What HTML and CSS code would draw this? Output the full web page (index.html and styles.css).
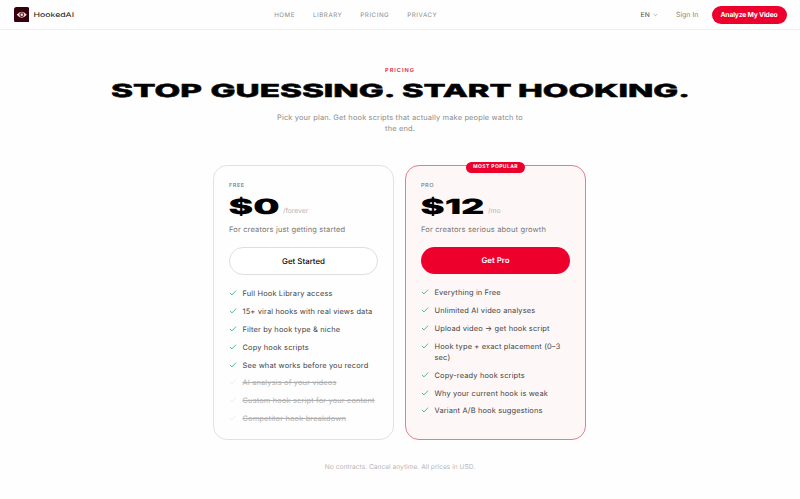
FILE: index.html
```html
<!DOCTYPE html>
<html lang="en">

<head>
    <meta charset="UTF-8">
    <title>HookedAI - Pricing</title>
    <link rel="stylesheet" href="styles.css">
</head>

<body>

    <svg class="defs" width="0" height="0">
        <symbol id="check" viewBox="0 0 8 8">
            <path d="M1.2 4.2 L3 5.9 L6.8 1.9" fill="none" stroke="currentColor" stroke-width="0.9" stroke-linecap="round" stroke-linejoin="round" />
        </symbol>
    </svg>

    <header>
        <div class="brand">
            <svg class="logo" viewBox="0 0 16 16">
                <rect width="16" height="16" rx="2.6" fill="#35000d" />
                <path d="M2.8 8 Q8 1.9 13.2 8 Q8 14.1 2.8 8Z" fill="#f3dcd6" />
                <circle cx="8" cy="8" r="2.5" fill="#6d2632" />
                <circle cx="8" cy="8" r="1.3" fill="#f3dcd6" />
            </svg>
            <svg class="name" width="42" height="14">
                <text x="0.5" y="9.4" textLength="40.5" lengthAdjust="spacingAndGlyphs">HookedAI</text>
            </svg>
        </div>
        <nav>
            <a>HOME</a>
            <a>LIBRARY</a>
            <a>PRICING</a>
            <a>PRIVACY</a>
        </nav>
        <div class="actions">
            <span class="lang">EN
                <svg width="5" height="4" viewBox="0 0 5 4"><path d="M0.7 0.9 L2.5 2.7 L4.3 0.9" fill="none" stroke="#999" stroke-width="0.7" /></svg>
            </span>
            <a class="signin">Sign In</a>
            <a class="cta">Analyze My Video</a>
        </div>
    </header>

    <main>
        <p class="eyebrow">PRICING</p>
        <h1>
            <svg width="580" height="26">
                <text x="1" y="19.5" textLength="91" lengthAdjust="spacingAndGlyphs">STOP</text>
                <text x="100.5" y="19.5" textLength="185" lengthAdjust="spacingAndGlyphs">GUESSING.</text>
                <text x="292" y="19.5" textLength="109.5" lengthAdjust="spacingAndGlyphs">START</text>
                <text x="408" y="19.5" textLength="172" lengthAdjust="spacingAndGlyphs">HOOKING.</text>
            </svg>
        </h1>
        <p class="intro">Pick your plan. Get hook scripts that actually make people watch to the end.</p>

        <section class="plans">
            <article class="card">
                <h2>FREE</h2>
                <div class="price">
                    <svg width="51" height="26">
                        <text x="-0.5" y="20" textLength="51" lengthAdjust="spacingAndGlyphs">$0</text>
                    </svg>
                    <span>/forever</span>
                </div>
                <p class="desc">For creators just getting started</p>
                <a class="button">Get Started</a>
                <ul>
                    <li><svg><use href="#check" /></svg><span>Full Hook Library access</span></li>
                    <li><svg><use href="#check" /></svg><span>15+ viral hooks with real views data</span></li>
                    <li><svg><use href="#check" /></svg><span>Filter by hook type &amp; niche</span></li>
                    <li><svg><use href="#check" /></svg><span>Copy hook scripts</span></li>
                    <li><svg><use href="#check" /></svg><span>See what works before you record</span></li>
                    <li class="off"><svg><use href="#check" /></svg><span>AI analysis of your videos</span></li>
                    <li class="off"><svg><use href="#check" /></svg><span>Custom hook script for your content</span></li>
                    <li class="off"><svg><use href="#check" /></svg><span>Competitor hook breakdown</span></li>
                </ul>
            </article>

            <article class="card pro">
                <div class="badge">MOST POPULAR</div>
                <h2>PRO</h2>
                <div class="price">
                    <svg width="64" height="26">
                        <text x="-0.5" y="20" textLength="64" lengthAdjust="spacingAndGlyphs">$12</text>
                    </svg>
                    <span>/mo</span>
                </div>
                <p class="desc">For creators serious about growth</p>
                <a class="button">Get Pro</a>
                <ul>
                    <li><svg><use href="#check" /></svg><span>Everything in Free</span></li>
                    <li><svg><use href="#check" /></svg><span>Unlimited AI video analyses</span></li>
                    <li><svg><use href="#check" /></svg><span>Upload video → get hook script</span></li>
                    <li><svg><use href="#check" /></svg><span>Hook type + exact placement (0–3 sec)</span></li>
                    <li><svg><use href="#check" /></svg><span>Copy-ready hook scripts</span></li>
                    <li><svg><use href="#check" /></svg><span>Why your current hook is weak</span></li>
                    <li><svg><use href="#check" /></svg><span>Variant A/B hook suggestions</span></li>
                </ul>
            </article>
        </section>

        <p class="note">No contracts. Cancel anytime. All prices in USD.</p>
    </main>

</body>

</html>
```
FILE: styles.css
```css
* {
    box-sizing: border-box;
}

body {
    margin: 0;
    height: 499px;
    overflow: hidden;
    background-color: #fefefe;
    color: #0a0a0a;
    font-family: Inter, "Liberation Sans", sans-serif;
    text-rendering: geometricPrecision;
}

h1, h2, p, ul {
    margin: 0;
    padding: 0;
}

svg {
    display: block;
    flex: none;
}

.defs {
    display: none;
}

header {
    display: flex;
    align-items: center;
    justify-content: space-between;
    height: 30px;
    padding: 0 13.5px;
    border-bottom: 1px solid #efefef;
}

.brand {
    display: flex;
    align-items: center;
    gap: 4px;
}

.logo {
    width: 15.5px;
    height: 15.5px;
}

.name text {
    font-size: 6.6px;
    font-weight: 400;
    fill: #111;
}

nav {
    display: flex;
    gap: 18px;
    margin-right: 4px;
    padding-top: 1px;
    font-size: 6.2px;
    letter-spacing: 0.55px;
    color: #8c8c8c;
}

.actions {
    display: flex;
    align-items: center;
    justify-content: flex-end;
    font-size: 7px;
    color: #888;
}

.lang {
    display: flex;
    align-items: center;
    gap: 3px;
    margin-right: 18px;
    font-size: 6.6px;
    font-weight: 500;
    letter-spacing: 0.2px;
    color: #666;
}

.signin {
    margin-right: 13px;
}

.cta {
    width: 75px;
    height: 18px;
    border-radius: 9px;
    background-color: #ee002d;
    color: #fff;
    font-size: 6.8px;
    font-weight: 700;
    line-height: 18px;
    letter-spacing: -0.2px;
    text-align: center;
}

main {
    display: flex;
    flex-direction: column;
    align-items: center;
}

.eyebrow {
    margin-top: 36px;
    font-size: 5.6px;
    font-weight: 600;
    line-height: 10px;
    letter-spacing: 1px;
    color: #e0193f;
}

h1 {
    margin-top: 1px;
}

h1 text {
    font-size: 18px;
    font-weight: 800;
    stroke: #0a0a0a;
    stroke-width: 0.5px;
}

.intro {
    width: 256px;
    margin-top: 9px;
    font-size: 7.45px;
    line-height: 11.2px;
    letter-spacing: 0.15px;
    text-align: center;
    color: #8b8b8b;
}

.plans {
    display: grid;
    grid-template-columns: 181px 181px;
    gap: 11px;
    margin-top: 31px;
    margin-right: 1px;
}

.card {
    position: relative;
    height: 275px;
    padding: 16px 15px;
    border: 1px solid #e2e2e2;
    border-radius: 14px;
}

.pro {
    border-color: #df7f91;
    background-color: #fef7f7;
}

.badge {
    position: absolute;
    top: -4px;
    left: 60px;
    width: 59px;
    height: 10.5px;
    border-radius: 6px;
    background-color: #ee002d;
    color: #fff;
    font-size: 5px;
    font-weight: 700;
    line-height: 11px;
    letter-spacing: 0.4px;
    text-align: center;
}

h2 {
    font-size: 5.6px;
    font-weight: 500;
    line-height: 9px;
    letter-spacing: 0.5px;
    color: #777;
}

.price {
    display: flex;
    gap: 3px;
    height: 26px;
    margin-top: 3px;
}

.price text {
    font-size: 21px;
    font-weight: 900;
}

.price span {
    margin-top: 12px;
    font-size: 6.8px;
    line-height: 10px;
    color: #b5b5b5;
}

.desc {
    margin-top: 3.5px;
    font-size: 7.5px;
    line-height: 11px;
    letter-spacing: 0.15px;
    color: #777;
}

.button {
    display: block;
    height: 28px;
    margin-top: 12.5px;
    border: 1px solid #dedede;
    border-radius: 14px;
    background-color: #fff;
    font-size: 7.9px;
    font-weight: 500;
    line-height: 26px;
    text-align: center;
}

.pro .button {
    height: 27px;
    border: none;
    background-color: #ee002d;
    color: #fff;
    font-weight: 600;
}

ul {
    display: flex;
    flex-direction: column;
    gap: 6.6px;
    margin-top: 13px;
    list-style: none;
}

li {
    display: flex;
    gap: 5.5px;
    font-size: 7.45px;
    line-height: 11.2px;
    letter-spacing: 0.15px;
    color: #444;
}

li svg {
    width: 8px;
    height: 8px;
    margin-top: 1px;
    color: #3fb584;
}

.off span {
    color: #b0b0b0;
    text-decoration: line-through;
}

.off svg {
    color: #ececec;
}

.note {
    margin-top: 21.5px;
    font-size: 6.65px;
    line-height: 11px;
    color: #b8b8b8;
}
```
